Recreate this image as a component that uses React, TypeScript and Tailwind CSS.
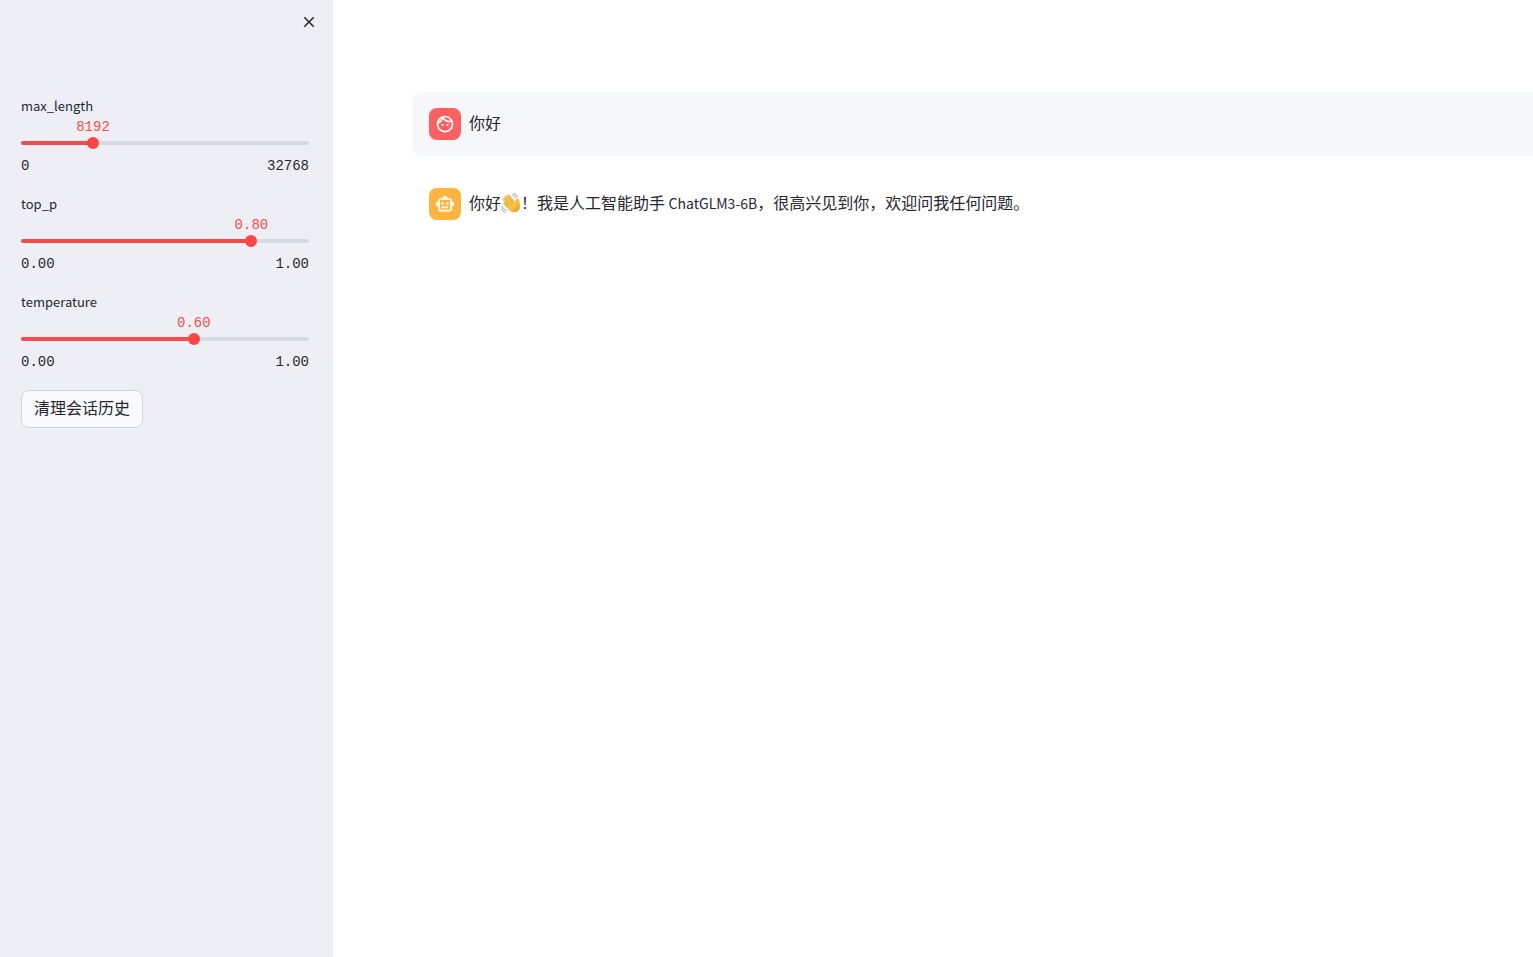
import { useId, useState } from 'react';
import type { ReactNode } from 'react';
import { MdClose, MdOutlineFace, MdOutlineSmartToy } from 'react-icons/md';

interface SliderProps {
  label: string;
  min: number;
  max: number;
  step: number;
  initial: number;
  digits: number;
}

function Slider({ label, min, max, step, initial, digits }: SliderProps) {
  const id = useId();
  const [value, setValue] = useState(initial);
  const percent = ((value - min) / (max - min)) * 100;

  return (
    <div className="text-sm">
      <label htmlFor={id} className="block text-[13px] leading-5">
        {label}
      </label>
      <div className="relative h-5">
        <output
          htmlFor={id}
          className="absolute top-0 -translate-x-1/2 font-['Liberation_Mono',monospace] leading-[22px] text-[#ff4b4b]"
          style={{ left: `${percent}%` }}
        >
          {value.toFixed(digits)}
        </output>
      </div>
      <div className="grid h-3.5 items-center">
        <div className="h-1 overflow-hidden rounded-full bg-[#d7dae5] [grid-area:1/1]">
          <div className="h-full bg-[#f54b4d]" style={{ width: `${percent}%` }} />
        </div>
        {/* wider than the track by one thumb radius on each side */}
        <input
          id={id}
          type="range"
          min={min}
          max={max}
          step={step}
          value={value}
          onChange={(e) => setValue(Number(e.target.value))}
          className="-mx-1.5 h-3 cursor-pointer appearance-none bg-transparent outline-none [grid-area:1/1] [&::-webkit-slider-thumb]:size-3 [&::-webkit-slider-thumb]:appearance-none [&::-webkit-slider-thumb]:rounded-full [&::-webkit-slider-thumb]:bg-[#ff4545]"
        />
      </div>
      <div className="mt-1 flex justify-between font-['Liberation_Mono',monospace] leading-6">
        <span>{min.toFixed(digits)}</span>
        <span>{max.toFixed(digits)}</span>
      </div>
    </div>
  );
}

function WavingHand() {
  return (
    <svg viewBox="0 0 40 40" className="inline size-5 align-[-4px]" role="img" aria-label="waving hand">
      <defs>
        <linearGradient id="hand" x1="0" y1="0" x2="1" y2="1">
          <stop offset="0" stopColor="#ffd45c" />
          <stop offset="0.65" stopColor="#f9c03c" />
          <stop offset="1" stopColor="#e29a25" />
        </linearGradient>
      </defs>
      <path
        d="M30 22 C29 18 29 13 32 12 C36 11 36 17 37 22 C39 31 35 37 28 38 C22 39 18 35 14 31 L6 23 C4 20 7 18 9 20 L14 25 L5 15 C3 12 6 9 9 12 L18 21 L8 10 C6 7 9 4 12 7 L22 17 L14 7 C13 4 16 2 18 5 Z"
        fill="url(#hand)"
        stroke="#dc9c2b"
        strokeWidth="1"
        strokeLinejoin="round"
      />
      <path d="M9 20 L16 27 M9 12 L19 23 M12 7 L23 19" fill="none" stroke="#d9952a" strokeWidth="1.2" strokeLinecap="round" />
      <path
        d="M23 3 Q28 5 29 10 M26 1 Q32 3 33 8 M2 27 Q4 33 10 35 M1 32 Q3 37 8 39"
        fill="none"
        stroke="#85878c"
        strokeWidth="1.6"
        strokeLinecap="round"
      />
    </svg>
  );
}

interface MessageProps {
  role: 'user' | 'assistant';
  children: ReactNode;
}

function Message({ role, children }: MessageProps) {
  const isUser = role === 'user';
  return (
    <article className={isUser ? 'flex gap-2 rounded-l-lg bg-[#f6f7fb] p-4' : 'flex gap-2 p-4'}>
      <div
        className={
          isUser
            ? 'flex size-8 shrink-0 items-center justify-center rounded-lg bg-[#ff6060] text-white'
            : 'flex size-8 shrink-0 items-center justify-center rounded-lg bg-[#ffb43d] text-white'
        }
      >
        {isUser ? <MdOutlineFace size={20} /> : <MdOutlineSmartToy size={20} />}
      </div>
      <p className="leading-7">{children}</p>
    </article>
  );
}

export default function App() {
  return (
    <div className="flex min-h-screen bg-white font-['Noto_Sans_CJK_SC',sans-serif] text-[#262730]">
      <aside className="w-[333px] shrink-0 bg-[#eeeff5] pr-6 pl-[21px]">
        <div className="-mr-2 flex h-24 items-start justify-end pt-3">
          <button type="button" aria-label="Close sidebar" className="flex h-5 w-4 items-center justify-center">
            <MdClose size={18} className="shrink-0" />
          </button>
        </div>
        <div className="flex flex-col items-stretch gap-4">
          <Slider label="max_length" min={0} max={32768} step={1} initial={8192} digits={0} />
          <Slider label="top_p" min={0} max={1} step={0.01} initial={0.8} digits={2} />
          <Slider label="temperature" min={0} max={1} step={0.01} initial={0.6} digits={2} />
          <button
            type="button"
            className="flex h-[38px] items-center self-start rounded-lg border border-[#d2d3da] bg-[#f9fafc] px-3 pb-1"
          >
            清理会话历史
          </button>
        </div>
      </aside>
      <main className="flex min-w-0 flex-1 flex-col gap-4 pt-[92px] pl-20">
        <Message role="user">你好</Message>
        <Message role="assistant">
          你好
          <WavingHand />
          ！我是人工智能助手 <span className="text-sm">ChatGLM3-6B</span>，很高兴见到你，欢迎问我任何问题。
        </Message>
      </main>
    </div>
  );
}
